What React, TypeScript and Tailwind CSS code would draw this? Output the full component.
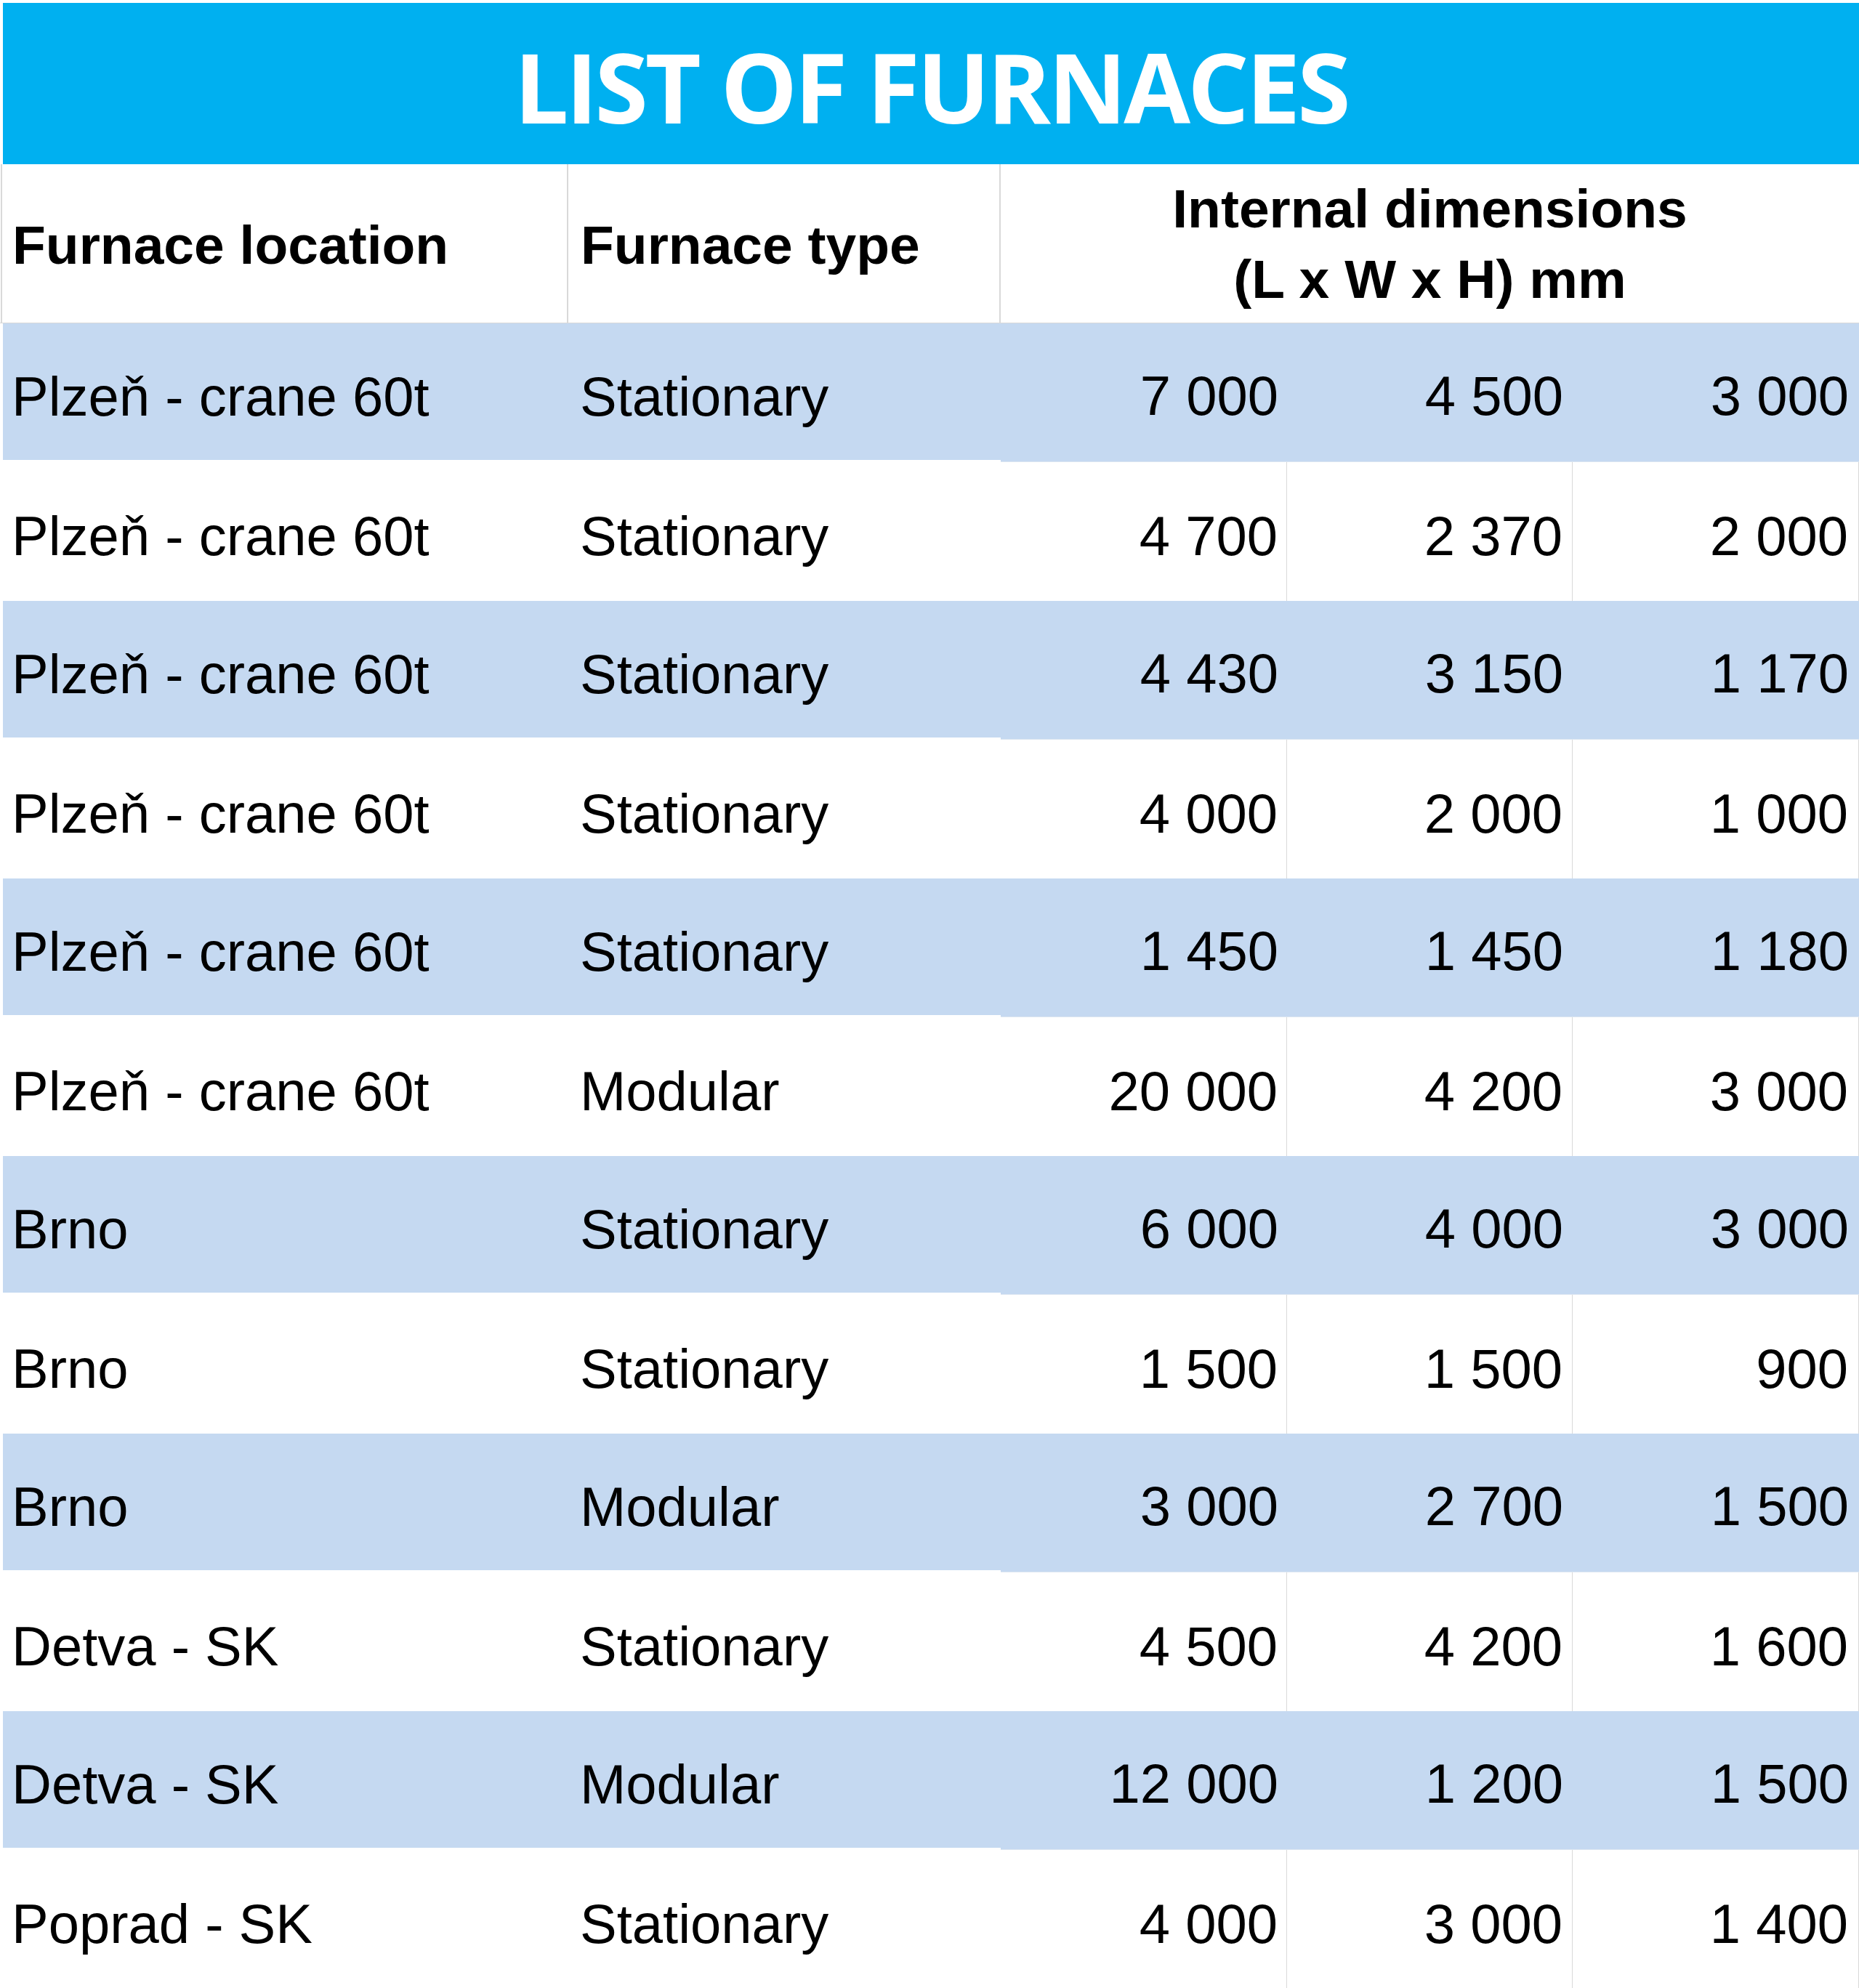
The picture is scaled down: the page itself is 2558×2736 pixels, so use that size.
import React from 'react'

type Furnace = {
  location: string
  type: 'Stationary' | 'Modular'
  length: string
  width: string
  height: string
}

const furnaces: Furnace[] = [
  { location: 'Plzeň - crane 60t', type: 'Stationary', length: '7 000', width: '4 500', height: '3 000' },
  { location: 'Plzeň - crane 60t', type: 'Stationary', length: '4 700', width: '2 370', height: '2 000' },
  { location: 'Plzeň - crane 60t', type: 'Stationary', length: '4 430', width: '3 150', height: '1 170' },
  { location: 'Plzeň - crane 60t', type: 'Stationary', length: '4 000', width: '2 000', height: '1 000' },
  { location: 'Plzeň - crane 60t', type: 'Stationary', length: '1 450', width: '1 450', height: '1 180' },
  { location: 'Plzeň - crane 60t', type: 'Modular', length: '20 000', width: '4 200', height: '3 000' },
  { location: 'Brno', type: 'Stationary', length: '6 000', width: '4 000', height: '3 000' },
  { location: 'Brno', type: 'Stationary', length: '1 500', width: '1 500', height: '900' },
  { location: 'Brno', type: 'Modular', length: '3 000', width: '2 700', height: '1 500' },
  { location: 'Detva - SK', type: 'Stationary', length: '4 500', width: '4 200', height: '1 600' },
  { location: 'Detva - SK', type: 'Modular', length: '12 000', width: '1 200', height: '1 500' },
  { location: 'Poprad - SK', type: 'Stationary', length: '4 000', width: '3 000', height: '1 400' },
]

const gridCols = 'grid grid-cols-[782px_595px_394px_393px_394px]'

function FurnaceRow({ furnace, shaded }: { furnace: Furnace; shaded: boolean }) {
  if (shaded) {
    return (
      <div className={`${gridCols} h-[191px]`}>
        <div className="ml-[4px] flex items-center border-b-[3px] border-white bg-[#c5d9f1] pl-[12px] pt-[13px]">
          {furnace.location}
        </div>
        <div className="flex items-center border-b-[3px] border-white bg-[#c5d9f1] pl-[16px] pt-[13px]">
          {furnace.type}
        </div>
        <div className="col-span-3 grid grid-cols-[394px_393px_394px] border-b border-[#dce6f1] bg-[#c5d9f1]">
          <div className="flex items-center justify-end pr-[12px] pt-[10px]">{furnace.length}</div>
          <div className="flex items-center justify-end pr-[13px] pt-[10px]">{furnace.width}</div>
          <div className="flex items-center justify-end pr-[14px] pt-[10px]">{furnace.height}</div>
        </div>
      </div>
    )
  }

  return (
    <div className={`${gridCols} h-[191px] bg-white`}>
      <div className="ml-[4px] flex items-center pl-[12px] pt-[13px]">{furnace.location}</div>
      <div className="flex items-center pl-[16px] pt-[13px]">{furnace.type}</div>
      <div className="flex items-center justify-end border-r border-[#d9d9d9] pr-[12px] pt-[13px]">
        {furnace.length}
      </div>
      <div className="flex items-center justify-end border-r border-[#d9d9d9] pr-[13px] pt-[13px]">
        {furnace.width}
      </div>
      <div className="flex items-center justify-end border-r border-[#d9d9d9] pr-[14px] pt-[13px]">
        {furnace.height}
      </div>
    </div>
  )
}

export default function App() {
  return (
    <div className="w-[2558px] overflow-hidden bg-white pt-[4px] [font-family:'Liberation_Sans',Arial,sans-serif] text-[76px] leading-none text-black">
      <div className="ml-[4px] flex h-[222px] items-center justify-center bg-[#00b0f0] pt-[6px]">
        <h1 className="[font-family:'Open_Sans',sans-serif] text-[133px] font-bold leading-none tracking-[-4px] text-white">
          LIST OF FURNACES
        </h1>
      </div>

      <div className={`${gridCols} h-[219px] border-b border-[#d9d9d9] text-[75px] font-bold`}>
        <div className="ml-[1px] flex items-center border-x-[2px] border-l-[#d9d9d9] border-r-[#d9d9d9] pl-[14px] pt-[4px]">
          Furnace location
        </div>
        <div className="flex items-center border-r-[2px] border-[#d9d9d9] pl-[17px] pt-[4px]">Furnace type</div>
        <div className="col-span-3 flex items-center justify-center pt-[2px] text-center leading-[97px]">
          Internal dimensions
          <br />
          (L x W x H) mm
        </div>
      </div>

      {furnaces.map((furnace, i) => (
        <FurnaceRow key={i} furnace={furnace} shaded={i % 2 === 0} />
      ))}
    </div>
  )
}
